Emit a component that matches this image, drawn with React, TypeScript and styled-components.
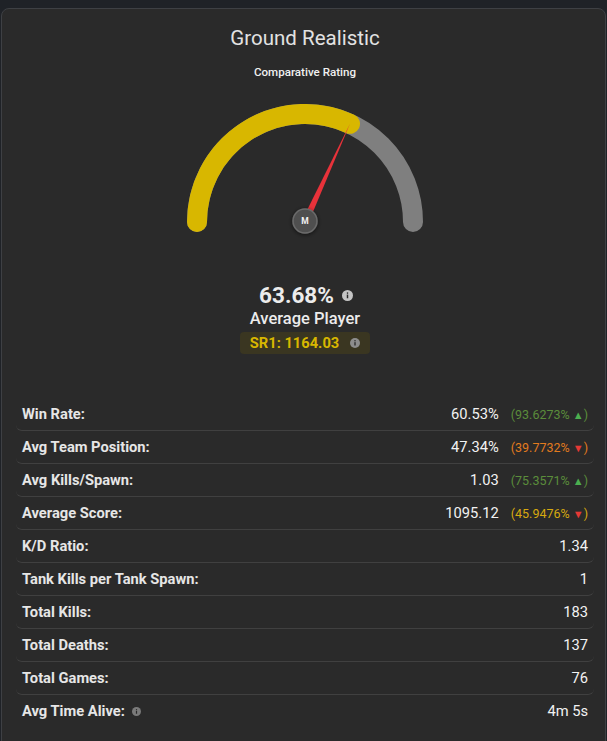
import React from 'react'
import styled, { createGlobalStyle } from 'styled-components'

type Trend = { text: string; color: string; up: boolean }

type Stat = {
    label: string
    value: string
    trend?: Trend
    info?: boolean
}

const stats: Stat[] = [
    { label: 'Win Rate:', value: '60.53%', trend: { text: '93.6273%', color: '#5b8d3b', up: true } },
    { label: 'Avg Team Position:', value: '47.34%', trend: { text: '39.7732%', color: '#e27b1e', up: false } },
    { label: 'Avg Kills/Spawn:', value: '1.03', trend: { text: '75.3571%', color: '#5b8d3b', up: true } },
    { label: 'Average Score:', value: '1095.12', trend: { text: '45.9476%', color: '#d7a90f', up: false } },
    { label: 'K/D Ratio:', value: '1.34' },
    { label: 'Tank Kills per Tank Spawn:', value: '1' },
    { label: 'Total Kills:', value: '183' },
    { label: 'Total Deaths:', value: '137' },
    { label: 'Total Games:', value: '76' },
    { label: 'Avg Time Alive:', value: '4m 5s', info: true },
]

const rating = 63.68

const GlobalStyle = createGlobalStyle`
    body {
        margin: 0;
        background: #1f2227;
        font-family: Roboto, 'Liberation Sans', sans-serif;
        color: #e4e4e4;
    }
`

const Gauge = ({ percent }: { percent: number }) => {
    const cx = 120
    const cy = 118
    const r = 108
    const theta = Math.PI - (percent / 100) * Math.PI
    const ex = cx + r * Math.cos(theta)
    const ey = cy - r * Math.sin(theta)
    const px = Math.sin(theta) * 3.4
    const py = Math.cos(theta) * 3.4

    return (
        <GaugeSvg width={240} height={136} viewBox="0 0 240 136">
            <defs>
                <filter id="knobShadow" x="-50%" y="-50%" width="200%" height="200%">
                    <feDropShadow dx="0" dy="1" stdDeviation="2" floodColor="#000" floodOpacity="0.6" />
                </filter>
            </defs>
            <path
                d={`M ${cx - r} ${cy} A ${r} ${r} 0 0 1 ${cx + r} ${cy}`}
                fill="none"
                stroke="#7f7f7f"
                strokeWidth={20}
                strokeLinecap="round"
            />
            <path
                d={`M ${cx - r} ${cy} A ${r} ${r} 0 0 1 ${ex} ${ey}`}
                fill="none"
                stroke="#d8b700"
                strokeWidth={20}
                strokeLinecap="round"
            />
            <polygon
                points={`${cx + px},${cy + py} ${cx - px},${cy - py} ${ex},${ey}`}
                fill="#e8323a"
            />
            <circle cx={cx} cy={cy - 1} r={12} fill="#4f4f4f" stroke="#6b6b6b" strokeWidth={1.5} filter="url(#knobShadow)" />
            <text
                x={cx}
                y={cy + 2}
                textAnchor="middle"
                fontSize={8.5}
                fontWeight={700}
                fill="#f2f2f2"
                fontFamily="Roboto, sans-serif"
            >
                M
            </text>
        </GaugeSvg>
    )
}

const InfoIcon = ({ size, color }: { size: number; color: string }) => (
    <svg width={size} height={size} viewBox="0 0 12 12">
        <circle cx={6} cy={6} r={6} fill={color} />
        <rect x={5.2} y={5} width={1.6} height={4} fill="#2a2a2a" />
        <circle cx={6} cy={3.4} r={0.9} fill="#2a2a2a" />
    </svg>
)

export default function App() {
    return (
        <>
            <GlobalStyle />
            <Card>
                <Title>Ground Realistic</Title>
                <Subtitle>Comparative Rating</Subtitle>
                <Gauge percent={rating} />
                <Score>
                    {rating.toFixed(2)}%
                    <InfoIcon size={11} color="#c4c4c4" />
                </Score>
                <Tier>Average Player</Tier>
                <Badge>
                    SR1: 1164.03
                    <InfoIcon size={10} color="#8d8d8d" />
                </Badge>
                <StatList>
                    {stats.map(s => (
                        <Row key={s.label}>
                            <Label>
                                {s.label}
                                {s.info && <InfoIcon size={9} color="#7a7a7a" />}
                            </Label>
                            <Value>
                                {s.value}
                                {s.trend && (
                                    <TrendText color={s.trend.color}>
                                        ({s.trend.text}{' '}
                                        <Arrow color={s.trend.up ? '#4caf50' : '#e53935'}>
                                            {s.trend.up ? '▲' : '▼'}
                                        </Arrow>
                                        )
                                    </TrendText>
                                )}
                            </Value>
                        </Row>
                    ))}
                </StatList>
            </Card>
        </>
    )
}

const Card = styled.div`
    margin: 8px 0 0 1px;
    width: 605px;
    min-height: 760px;
    box-sizing: border-box;
    padding: 17px 11px 20px 14px;
    background: #2a2a2a;
    border: 1px solid #3e4044;
    border-radius: 8px;
    display: flex;
    flex-direction: column;
    align-items: center;
`

const Title = styled.div`
    font-size: 20.5px;
    line-height: 24px;
    color: #e2e2e2;
`

const Subtitle = styled.div`
    margin-top: 15px;
    font-size: 11.6px;
    line-height: 14px;
    font-weight: 500;
    color: #f0f0f0;
`

const GaugeSvg = styled.svg`
    margin-top: 25px;
    display: block;
`

const Score = styled.div`
    margin-top: 42px;
    display: flex;
    align-items: center;
    gap: 8px;
    font-size: 22.5px;
    line-height: 27px;
    font-weight: 700;
    color: #ececec;
    padding-left: 2px;
`

const Tier = styled.div`
    margin-top: 0;
    font-size: 16.5px;
    line-height: 19px;
    font-weight: 500;
    color: #ececec;
`

const Badge = styled.div`
    margin-top: 4px;
    height: 22px;
    padding: 0 10px 0 10px;
    display: flex;
    align-items: center;
    gap: 11px;
    background: #3a3621;
    border-radius: 4px;
    color: #d8b700;
    font-size: 14.7px;
    font-weight: 700;
`

const StatList = styled.div`
    margin-top: 44px;
    align-self: stretch;
    display: flex;
    flex-direction: column;
`

const Row = styled.div`
    height: 32px;
    padding: 0 6px;
    display: flex;
    align-items: center;
    justify-content: space-between;
    border-bottom: 1px solid #404040;
    border-radius: 6px;
    font-size: 14.7px;

    &:last-child {
        border-bottom-color: transparent;
    }
`

const Label = styled.div`
    display: flex;
    align-items: center;
    gap: 7px;
    font-weight: 700;
    color: #e6e6e6;
`

const Value = styled.div`
    display: flex;
    align-items: center;
    color: #f2f2f2;
`

const TrendText = styled.span<{ color: string }>`
    margin-left: 12px;
    color: ${p => p.color};
    font-size: 12.5px;
`

const Arrow = styled.span<{ color: string }>`
    color: ${p => p.color};
    font-size: 11px;
`
